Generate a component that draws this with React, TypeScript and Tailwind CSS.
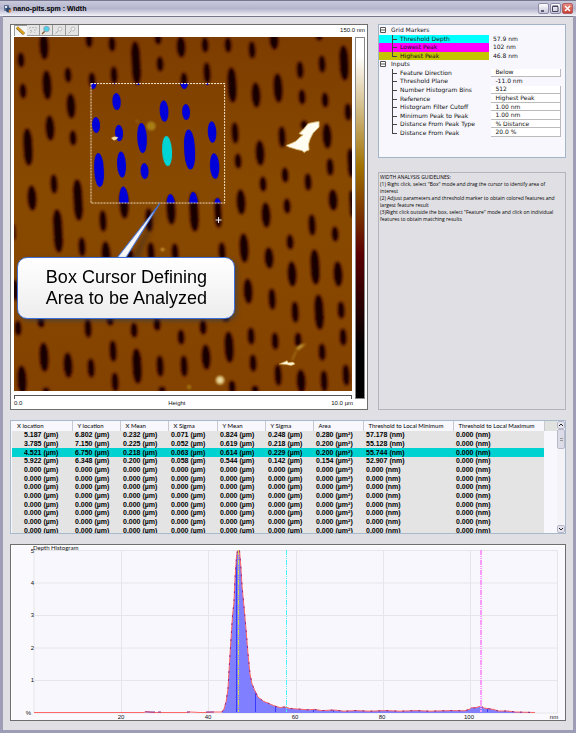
import { useState } from "react";

type Pit = [number, number, number, number];

// cx, cy, rx, ry in scan units
const pits: Pit[] = [
  [21, 60, 3, 7], [23, 91, 3, 7], [44, 46, 4, 13], [47, 85, 4, 14], [68, 75, 3, 7],
  [71, 106, 4, 12], [50, 128, 4, 12], [73, 138, 3, 7], [28, 147, 4, 18], [54, 184, 3, 9],
  [32, 198, 4, 12], [78, 200, 4, 20], [89, 40, 3, 7], [112, 44, 3, 7], [114, 75, 3, 8],
  [136, 63, 4, 21], [158, 38, 3, 6], [160, 64, 3, 7], [181, 47, 4, 10], [92, 80, 3, 7],
  [184, 80, 3, 7], [205, 45, 3, 7], [228, 45, 3, 7], [252, 50, 3, 8], [274, 40, 4, 9],
  [319, 36, 3, 4], [207, 73, 3, 10], [232, 85, 4, 17], [256, 95, 4, 12], [278, 88, 4, 14],
  [300, 70, 3, 8], [322, 64, 3, 8], [344, 63, 4, 17], [302, 97, 3, 7], [325, 100, 3, 7],
  [348, 112, 3, 8], [235, 133, 3, 10], [238, 161, 3, 7], [260, 153, 4, 12], [282, 137, 3, 10],
  [327, 136, 4, 12], [330, 167, 3, 8], [285, 175, 3, 7], [263, 184, 3, 7], [308, 182, 3, 8],
  [351, 163, 3, 14], [241, 202, 4, 12], [333, 200, 4, 10], [287, 206, 3, 7], [266, 215, 4, 12],
  [352, 204, 2, 13], [304, 125, 3, 4], [58, 231, 4, 21], [82, 247, 3, 9], [103, 221, 3, 10],
  [106, 254, 4, 12], [149, 220, 3, 11], [151, 253, 3, 10], [175, 253, 3, 9], [130, 256, 3, 6],
  [14, 232, 1, 7], [15, 290, 3, 10], [18, 328, 3, 7], [41, 321, 3, 6], [44, 357, 4, 14],
  [22, 380, 4, 14], [68, 365, 4, 12], [88, 328, 3, 9], [91, 368, 3, 9], [110, 319, 3, 6],
  [113, 351, 3, 10], [115, 382, 3, 9], [134, 330, 3, 7], [137, 366, 4, 17], [157, 324, 3, 6],
  [160, 366, 3, 10], [181, 337, 3, 7], [184, 366, 3, 10], [46, 391, 3, 3], [162, 390, 3, 3],
  [244, 248, 4, 14], [222, 252, 3, 9], [312, 225, 3, 10], [335, 234, 3, 7], [290, 242, 3, 7],
  [269, 258, 4, 10], [292, 274, 4, 12], [315, 267, 4, 17], [338, 274, 4, 12], [248, 291, 4, 12],
  [272, 299, 3, 10], [295, 312, 3, 10], [319, 312, 4, 17], [341, 310, 3, 8], [203, 327, 3, 7],
  [226, 318, 3, 3], [206, 357, 4, 12], [229, 347, 4, 15], [251, 336, 3, 8], [253, 363, 3, 8],
  [275, 341, 3, 8], [298, 340, 3, 7], [322, 352, 3, 8], [343, 337, 3, 8], [278, 375, 3, 10],
  [301, 381, 4, 11], [324, 381, 3, 10], [346, 375, 3, 10], [232, 387, 3, 6], [255, 390, 3, 4],
  [124, 204, 4, 14], [171, 210, 4, 14], [194, 212, 4, 19], [218, 213, 3, 14],
];

const features: Pit[] = [
  [93, 82, 3.5, 7], [114, 78, 3, 6], [138, 78, 4, 7], [184, 81, 4, 8], [207, 79, 3, 6],
  [116.5, 101.5, 4.2, 8.6], [96, 125, 4, 8], [119, 133, 4, 8.2], [142, 138, 4.8, 15],
  [99, 170, 4.8, 17], [121.5, 164.5, 4.5, 13], [144.5, 171, 4, 8], [164, 111, 4.4, 10.8],
  [186, 112, 4, 8], [189.5, 149.5, 5.4, 20], [212, 132, 4.3, 10.8], [214.5, 166, 4.7, 12.8],
  [124, 203, 4.6, 16.5], [171, 209, 4.4, 15], [194, 211, 4.4, 19], [218, 212, 4, 14],
];

const markers = [
  { label: "Threshold Depth", value: "57.9 nm", bg: "bg-[#00ffff]" },
  { label: "Lowest Peak", value: "102 nm", bg: "bg-[#ff00ff]" },
  { label: "Highest Peak", value: "46.8 nm", bg: "bg-[#c4c400]" },
];

const inputs = [
  { id: "direction", label: "Feature Direction", value: "Below" },
  { id: "plane", label: "Threshold Plane", value: "-11.0 nm", readOnly: true },
  { id: "bins", label: "Number Histogram Bins", value: "512" },
  { id: "reference", label: "Reference", value: "Highest Peak" },
  { id: "cutoff", label: "Histogram Filter Cutoff", value: "1.00 nm" },
  { id: "minpeak", label: "Minimum Peak to Peak", value: "1.00 nm" },
  { id: "disttype", label: "Distance From Peak Type", value: "% Distance" },
  { id: "distance", label: "Distance From Peak", value: "20.0 %" },
];

const columns = [
  { title: "X location", unit: "(µm)", width: "w-[60px]" },
  { title: "Y location", unit: "(µm)", width: "w-[48px]" },
  { title: "X Mean", unit: "(µm)", width: "w-[48px]" },
  { title: "X Sigma", unit: "(µm)", width: "w-[49px]" },
  { title: "Y Mean", unit: "(µm)", width: "w-[48px]" },
  { title: "Y Sigma", unit: "(µm)", width: "w-[48px]" },
  { title: "Area", unit: "(µm²)", width: "w-[50px]" },
  { title: "Threshold to Local Minimum", unit: "(nm)", width: "w-[90px]" },
  { title: "Threshold to Local Maximum", unit: "(nm)", width: "w-[91px]" },
];

const zeros = ["0.000", "0.000", "0.000", "0.000", "0.000", "0.000", "0.000", "0.000", "0.000"];

const rows = [
  ["5.187", "6.802", "0.232", "0.071", "0.824", "0.248", "0.280", "57.178", "0.000"],
  ["3.785", "7.150", "0.225", "0.052", "0.619", "0.218", "0.200", "55.128", "0.000"],
  ["4.521", "6.750", "0.218", "0.063", "0.614", "0.229", "0.200", "55.744", "0.000"],
  ["5.922", "6.348", "0.200", "0.058", "0.544", "0.142", "0.154", "52.907", "0.000"],
  zeros, zeros, zeros, zeros, zeros, zeros, zeros, zeros,
];

function TitleBar() {
  return (
    <header className="flex h-4 items-center border-t border-[#77778f] bg-linear-to-b from-[#c9c9dc] via-[#b4b4cc] to-[#f4f4fa] pl-1 pr-[3px]">
      <svg viewBox="0 0 8 8" className="mr-px size-2">
        <rect x="0" y="0" width="5" height="6" rx="1" fill="#5c6f8f" />
        <rect x="1" y="1" width="2" height="2" fill="#dfe8f4" />
        <circle cx="4.500" cy="5" r="2.500" fill="#27456e" />
        <circle cx="6" cy="6" r="1.400" fill="#d98a3a" />
      </svg>
      <h1 className="flex-1 text-[7px] leading-[10px] font-bold text-black">nano-pits.spm : Width</h1>
      <div className="flex gap-px">
        <button aria-label="Minimize" className="size-[11px] rounded-[2px] border border-[#8c8ca8] bg-linear-to-b from-white to-[#c4c4d8]">
          <svg viewBox="0 0 9 9"><path d="M2 7h3" stroke="#33334d" strokeWidth="1.500" /></svg>
        </button>
        <button aria-label="Maximize" className="size-[11px] rounded-[2px] border border-[#8c8ca8] bg-linear-to-b from-white to-[#c4c4d8]">
          <svg viewBox="0 0 9 9"><path d="M1.500 2.500h5.500v5h-5.500zM1.500 2h5.500" fill="none" stroke="#44445c" /></svg>
        </button>
        <button aria-label="Close" className="size-[11px] rounded-[2px] border border-[#b06060] bg-linear-to-b from-[#e88a80] to-[#c93b30]">
          <svg viewBox="0 0 9 9"><path d="M2 2l5 5M7 2l-5 5" stroke="#fff" strokeWidth="1.500" /></svg>
        </button>
      </div>
    </header>
  );
}

function Toolbar() {
  const tool = "h-[11px] w-[13px] border-r border-b border-[#9a9a9a] bg-[#e4e4e4]";
  return (
    <div className="flex">
      <button aria-label="Measure" className="h-[11px] w-[13px] border-t border-l border-[#9a9a9a] bg-[#f4f4f4]">
        <svg viewBox="0 0 12 10"><path d="M2 1.500l7 6.500" stroke="#7a4f00" strokeWidth="3" /><path d="M2 1.300l7 6.500" stroke="#e0a520" strokeWidth="2" /></svg>
      </button>
      <button aria-label="Pan" className={tool}>
        <svg viewBox="0 0 12 10"><path d="M2 3.500l2-1.500M5 2.500h2M8 2l2 1.500M3 5.500h2M7 5h2M3 7.500l2-1M7 7.500h1" stroke="#bcbcbc" fill="none" /></svg>
      </button>
      <button aria-label="Zoom" className={tool}>
        <svg viewBox="0 0 12 10"><path d="M5 6L2 9" stroke="#8a5a28" strokeWidth="1.500" /><circle cx="6.500" cy="4" r="2.800" fill="#4ed0ea" stroke="#8fa8b8" /></svg>
      </button>
      <button aria-label="Zoom in" className={tool}>
        <svg viewBox="0 0 12 10"><path d="M5.500 5.500L2.500 8.500" stroke="#aaa" /><circle cx="7" cy="4" r="2" fill="#eee" stroke="#c0c0c0" /></svg>
      </button>
      <button aria-label="Zoom out" className={tool}>
        <svg viewBox="0 0 12 10"><path d="M5.500 5.500L2.500 8.500" stroke="#aaa" /><circle cx="7" cy="4" r="2" fill="#eee" stroke="#c0c0c0" /></svg>
      </button>
    </div>
  );
}

function PitShape({ pit }: { pit: Pit }) {
  const [cx, cy, rx, ry] = pit;
  return (
    <rect
      x={cx - rx}
      y={cy - ry}
      width={rx * 2}
      height={ry * 2}
      rx={rx}
      ry={Math.min(ry, rx * 3)}
      transform={`rotate(-3 ${cx} ${cy})`}
    />
  );
}

function Scan() {
  return (
    <svg viewBox="14 37 338 354" className="block w-full">
      <defs>
        <linearGradient id="surface" x1="0" y1="0" x2="0" y2="1">
          <stop offset="0" stopColor="#7d3d00" />
          <stop offset="0.400" stopColor="#874900" />
          <stop offset="0.700" stopColor="#874700" />
          <stop offset="1" stopColor="#834200" />
        </linearGradient>
        <filter id="soft"><feGaussianBlur stdDeviation="0.900" /></filter>
        <filter id="shade"><feGaussianBlur stdDeviation="2" /></filter>
        <clipPath id="cursorBox"><rect x="91" y="83" width="133" height="120" /></clipPath>
      </defs>
      <rect x="14" y="37" width="338" height="354" fill="url(#surface)" />
      <g filter="url(#soft)" fill="#120000" stroke="#4a1200" strokeWidth="1.500">
        {pits.map((p, i) => <PitShape key={i} pit={p} />)}
      </g>

      {/* particles on the surface */}
      <g filter="url(#soft)">
        <circle cx="151" cy="126" r="4.600" fill="#a87f18" />
        <circle cx="137" cy="121" r="1.500" fill="#97650c" />
        <circle cx="220" cy="380" r="4.400" fill="#d9bd74" />
        <circle cx="220" cy="380" r="2" fill="#f0e2b4" />
        <path d="M305 344l-5 1-4 3 2 2 4-3z" fill="#d0a545" stroke="#a87818" />
        <path d="M296 351l-4 9" stroke="#a87818" strokeWidth="1.500" />
        <path d="M160 249l3-1 2 2-3 1z" fill="#e0b040" />
        <circle cx="189" cy="387" r="2" fill="#a87f18" />
      </g>
      <path d="M279 364l6-2.500 2-1 1 2 5-.5 2 2-4 1.500-5-1z" fill="#fff6dc" stroke="#c99b3a" strokeWidth="0.600" />
      <path d="M286 145.500l6-2.500 4-2 4-4 3-2-4-1.500 5-5 4-5 7-1.500 4-.5v5.500l-6 6-3 6-1.500 5 .5 6-3 1-2 1.500-2-2-5-1-8-2.500z" fill="#fffdf2" stroke="#d8bc70" strokeWidth="0.800" />

      {/* features found inside the box cursor */}
      <g clipPath="url(#cursorBox)">
        <g fill="#0000d8">
          {features.map((p, i) => <PitShape key={i} pit={p} />)}
        </g>
        <g fill="#00d5d5"><PitShape pit={[167, 151, 5, 15]} /></g>
      </g>
      <path d="M111 138l3-1.500 4 .5-1 2-3 1.500z" fill="#f5dfa0" />
      <rect x="91" y="83.500" width="133.500" height="119.500" fill="none" stroke="#f3e2c4" strokeDasharray="2 1" />
      <path d="M218.500 217v6M215.500 220h6" stroke="#fff" />

      <path d="M160 207L128 262h10z" fill="#223" opacity="0.350" filter="url(#shade)" />
      <path d="M160 203L116 259h9z" fill="#f8f8f8" stroke="#3d6fd8" />
    </svg>
  );
}

function ScanPanel() {
  return (
    <section className="min-w-0 flex-[355] border border-[#6e6e6e] bg-white pl-[3px] pr-0.5">
      <div className="flex h-3 items-start justify-between">
        <Toolbar />
        <span className="text-[6px] leading-[10px]">150.0 nm</span>
      </div>
      <div className="flex gap-[3px]">
        <div className="min-w-0 flex-1">
          <div className="relative">
            <Scan />
            <div className="absolute top-[62%] left-[1%] w-[64.5%] rounded-[10px] border border-[#3d6fd8] bg-linear-to-b from-white to-[#ededed] py-[9px] text-center text-lg leading-[21px] text-black shadow-[2px_2px_4px_#33445599]">
              Box Cursor Defining
              <br />
              Area to be Analyzed
            </div>
          </div>
          <div className="mt-1 h-1 border-x border-t border-[#555]" />
        </div>
        <div className="w-2.5 border border-[#888] bg-[linear-gradient(#fff_5%,#a07000_36%,#5a0000_60%,#000_86%)]" />
      </div>
      <div className="flex h-2.5 justify-between pr-3 text-[6px] leading-[9px]">
        <span>0.0</span>
        <span>Height</span>
        <span>10.0 µm</span>
      </div>
    </section>
  );
}

function Branch({ last }: { last?: boolean }) {
  return (
    <span className="flex w-[21px] shrink-0 justify-end self-stretch pr-0.5">
      <span className="relative w-1.5">
        <span className={last ? "absolute left-0 top-0 h-1/2 w-px bg-[#444]" : "absolute left-0 top-0 h-full w-px bg-[#444]"} />
        <span className="absolute left-0 top-1/2 h-px w-[5px] bg-[#444]" />
      </span>
    </span>
  );
}

function GroupRow({ label }: { label: string }) {
  return (
    <div className="flex min-h-0 flex-1 items-center gap-[5px] pl-px">
      <svg viewBox="0 0 6 6" className="size-1.5">
        <path d="M.5.5h5v5h-5zM1 3h4" fill="#fff" stroke="#555" />
      </svg>
      <span>{label}</span>
    </div>
  );
}

function ParameterTree() {
  const [values, setValues] = useState(inputs.map((i) => i.value));

  return (
    <section className="h-[134px] border border-[#a3b4c8] bg-[#f7f7fd] pt-px pr-1">
      <div className="flex h-[111px] flex-col font-['DejaVu_Sans',sans-serif] text-[6px] leading-[8px] text-[#111]">
        <GroupRow label="Grid Markers" />
        {markers.map((m, i) => (
          <div key={m.label} className="flex min-h-0 flex-1">
            <div className={`flex min-w-0 flex-[113] items-center ${m.bg}`}>
              <Branch last={i === 2} />
              <span>{m.label}</span>
            </div>
            <span className="min-w-0 flex-[70] pl-1">{m.value}</span>
          </div>
        ))}
        <GroupRow label="Inputs" />
        {inputs.map((item, i) => (
          <div key={item.id} className="flex min-h-0 flex-1">
            <div className="flex min-w-0 flex-[113] items-center">
              <Branch last={i === inputs.length - 1} />
              <label htmlFor={item.id} className="whitespace-nowrap">{item.label}</label>
            </div>
            <div className="flex min-w-0 flex-[70]">
              <input
                id={item.id}
                value={values[i]}
                readOnly={item.readOnly}
                onChange={(e) => setValues(values.map((v, n) => (n === i ? e.target.value : v)))}
                className={item.readOnly ? "w-full min-w-0 bg-transparent pl-1 outline-none" : "w-full min-w-0 border-r border-b border-[#bbb] bg-white pl-1 outline-none"}
              />
            </div>
          </div>
        ))}
      </div>
    </section>
  );
}

function Guidelines() {
  return (
    <section className="flex-1 border border-[#b4b4bc] pt-px pr-0.5 pl-px font-['Open_Sans',sans-serif] text-[5px] leading-[7px] text-black">
      <h2>WIDTH ANALYSIS GUIDELINES:</h2>
      <p>(1) Right click, select "Box" mode and drag the cursor to identify area of interest</p>
      <p>(2) Adjust parameters and threshold marker to obtain colored features and largest feature result</p>
      <p>(3)Right click outside the box, select "Feature" mode and click on individual features to obtain matching results</p>
    </section>
  );
}

function ResultsTable() {
  const [selected, setSelected] = useState(2);

  return (
    <section className="flex h-[114px] overflow-hidden border border-[#a9b9cc] bg-[#f7f7fd] pl-px">
      <div className="min-w-0 flex-1 overflow-hidden">
        <table className="h-[114px] w-full table-fixed border-collapse text-left text-[7px] leading-[8px] whitespace-nowrap text-black">
          <colgroup>
            {columns.map((c) => <col key={c.title} className={c.width} />)}
            <col />
          </colgroup>
          <thead>
            <tr className="h-2.5 font-[Lato,sans-serif] text-[6px]">
              {columns.map((c) => (
                <th key={c.title} className="border-r border-[#c8c8d0] p-0 pl-[5px] font-normal">{c.title}</th>
              ))}
              <th className="bg-[#e0e2e0] p-0" />
            </tr>
          </thead>
          <tbody>
            {rows.map((row, r) => (
              <tr key={r} onClick={() => setSelected(r)}>
                {row.map((v, c) => (
                  <td
                    key={c}
                    className={`p-0 font-bold ${c === 0 ? "pl-3" : "pl-[3px]"} ${r === selected ? "bg-[#00d2d2]" : "bg-[#e4e4e4]"}`}
                  >
                    {v} {columns[c].unit}
                  </td>
                ))}
                <td className="p-0" />
              </tr>
            ))}
          </tbody>
        </table>
      </div>
      <div className="flex w-2 flex-col bg-[#f4f4f8]">
        <button aria-label="Scroll up" className="h-2 rounded-[2px] border border-[#b8b8c8] bg-[#e4e4ee]">
          <svg viewBox="0 0 6 6"><path d="M1 4l2-2 2 2" fill="none" stroke="#222" /></svg>
        </button>
        <div className="flex h-5 flex-col items-center justify-center gap-px rounded-[2px] border border-[#b8b8c8] bg-[#dcdce8]">
          <span className="h-px w-[3px] bg-[#999]" />
          <span className="h-px w-[3px] bg-[#999]" />
        </div>
        <button aria-label="Scroll down" className="mt-auto h-2 rounded-[2px] border border-[#b8b8c8] bg-[#e4e4ee]">
          <svg viewBox="0 0 6 6"><path d="M1 2l2 2 2-2" fill="none" stroke="#222" /></svg>
        </button>
      </div>
    </section>
  );
}

const rise =
  "L224 710L226 703L228 690L229 672L231 640L232.500 617L234 603L235 580L236.500 558L237.500 551.500";
const fall =
  "L241 570L242 587L244 608L246 630L248 655L250 675L252 685L255 692L258 698L263 702L270 705L276 707.500L280 708.500L285 708L290 709.500L300 710.200L308 710.800L314 710.400L322 711.600L334 711L344 712.200L356 711.600L370 712.200L385 711.600L400 712.200L416 711.600L430 712.200L450 711.600L465 711.800L470 710L471.500 708.500L474 709L478 708L481 707L484 709L494 710.500L498 712L508 712L515 713L535 713.500";

function DepthHistogram() {
  return (
    <section className="border border-[#6e6e6e] bg-white">
      <svg viewBox="11 546 554 175" className="block w-full text-[6px]">
        <rect x="12" y="547" width="553" height="174" fill="#fafafe" />
        <rect x="34" y="551" width="524" height="163" fill="#f7f7fd" />
        <path d="M34 551.500h524M34 584h524M34 616.500h524M34 649h524M34 681.500h524M34 714h524M34 551v163M121.500 551v163M208.500 551v163M296.500 551v163M383.500 551v163M470.500 551v163M557.500 551v163" stroke="#e6e6ea" />
        <path d={`M222 713${rise}L239.500 551.500${fall}L535 714H222z`} fill="#7f7fff" />
        <path d="M236.500 556V713M255.500 692V713M275.500 707V713M313.500 711V713M333.500 711V713M487.500 709V713" stroke="#3a3aff" />
        <path d={`M34 713.500H144L146 712.500L152 713.500H186L190 713L200 713.500H205L214 713L222 713${rise}M239.500 551.500${fall}`} fill="none" stroke="#ff6666" />
        <path d={`M222 713${rise}M239.500 551.500${fall}`} fill="none" stroke="#8a2a8a" strokeDasharray="2 6" />
        <path d="M145 713h10M158 713h3M187 713h3M206 713h8" stroke="#8a309a" />
        <path d="M238.500 551V713" stroke="#d8d850" strokeDasharray="5 1 1 1 1 1" />
        <path d="M286.500 551V713" stroke="#4df3f8" strokeDasharray="5 1 1 1 1 1" />
        <path d="M481 551V713" stroke="#f99cf9" strokeWidth="2" strokeDasharray="5 1 1 1 1 1" />
        <g fill="#111" textAnchor="end">
          <text x="34" y="554">5</text>
          <text x="34" y="586">4</text>
          <text x="34" y="618">3</text>
          <text x="34" y="651">2</text>
          <text x="34" y="683">1</text>
          <text x="31" y="716">%</text>
        </g>
        <g fill="#111" textAnchor="middle">
          <text x="121" y="720">20</text>
          <text x="208" y="720">40</text>
          <text x="295" y="720">60</text>
          <text x="382" y="720">80</text>
          <text x="469" y="720">100</text>
          <text x="554" y="720">nm</text>
        </g>
        <text x="33" y="551" fill="#111" className="font-[Lato,sans-serif]">Depth Histogram</text>
      </svg>
    </section>
  );
}

export default function App() {
  return (
    <div className="flex min-h-screen flex-col bg-[#9d9db5] font-['Liberation_Sans',Arial,sans-serif] text-[#111]">
      <TitleBar />
      <main className="mx-[3px] mb-[3px] flex flex-1 flex-col gap-2.5 border-t border-[#77778a] bg-[#e0dfe3] pt-[7px] pr-[7px] pl-[7px]">
        <div className="flex gap-2.5">
          <ScanPanel />
          <div className="flex min-w-0 flex-[190] flex-col gap-3.5">
            <ParameterTree />
            <Guidelines />
          </div>
        </div>
        <ResultsTable />
        <DepthHistogram />
      </main>
    </div>
  );
}
